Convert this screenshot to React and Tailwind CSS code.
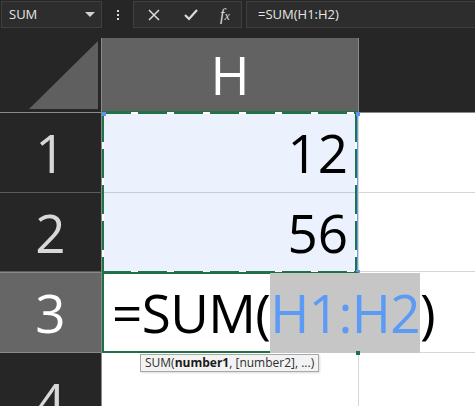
import React from "react";

const sans = { fontFamily: '"Open Sans", "Noto Sans", sans-serif' };

function Ants({ className }) {
  return <div className={`absolute ${className}`} />;
}

export default function App() {
  return (
    <div className="h-[406px] w-[475px] overflow-hidden bg-[#262626]" style={sans}>
      {/* formula bar */}
      <div className="flex h-[38px] items-start pt-[1px]">
        <div className="ml-[1px] flex h-[27px] w-[101px] items-center justify-between border border-[#3f3f3f] bg-[#2d2d2d] pl-[7px] pr-[6px]">
          <span className="text-[13px] text-[#e6e6e6]">SUM</span>
          <svg width="10" height="6" viewBox="0 0 10 6">
            <path d="M0 0h10L5 5z" fill="#d0d0d0" />
          </svg>
        </div>
        <div className="flex h-[27px] w-[31px] flex-col items-center justify-center gap-[2px]">
          <span className="h-[2px] w-[2px] bg-[#d6d6d6]" />
          <span className="h-[2px] w-[2px] bg-[#d6d6d6]" />
          <span className="h-[2px] w-[2px] bg-[#d6d6d6]" />
        </div>
        <div className="flex h-[27px] w-[109px] items-center border border-[#3f3f3f] bg-[#2d2d2d]">
          <div className="flex w-[38px] justify-center pl-[2px]">
            <svg width="12" height="12" viewBox="0 0 12 12">
              <path d="M1 1l10 10M11 1L1 11" stroke="#dcdcdc" strokeWidth="1.5" />
            </svg>
          </div>
          <div className="flex w-[38px] justify-center">
            <svg width="14" height="12" viewBox="0 0 14 12">
              <path d="M1 6l4 4 8-9" stroke="#dcdcdc" strokeWidth="2.2" fill="none" />
            </svg>
          </div>
          <div className="flex w-[30px] justify-center">
            <span className="text-[16px] italic text-[#dcdcdc]" style={{ fontFamily: '"Liberation Serif", serif' }}>
              f<span className="text-[12px]">x</span>
            </span>
          </div>
        </div>
        <div className="ml-[4px] flex h-[27px] flex-1 items-center border border-r-0 border-[#3f3f3f] bg-[#2d2d2d] pl-[11px]">
          <span className="text-[13px] text-[#e6e6e6]">=SUM(H1:H2)</span>
        </div>
      </div>

      {/* sheet */}
      <div className="relative grid grid-cols-[102px_256px_1fr] grid-rows-[75px_80px_79px_81px_60px] text-[53px] leading-none">
        {/* header row */}
        <div className="relative border-b border-r border-[#8a8a8a] bg-[#262626]">
          <svg className="absolute bottom-[3px] right-[3px]" width="69" height="68" viewBox="0 0 69 68">
            <path d="M69 0V68H0z" fill="#5f5f5f" />
          </svg>
        </div>
        <div className="flex items-center justify-center border-b-2 border-[#217346] bg-[#626262] text-white">
          H
        </div>
        <div className="border-b border-l border-[#8a8a8a] bg-[#262626]" />

        {/* row 1 */}
        <div className="flex items-center justify-center border-b border-r border-[#5c5c5c] border-r-[#8a8a8a] text-[#d8d8d8]">
          1
        </div>
        <div className="flex items-center justify-end border-b border-[#c9cbd3] bg-[#ebf2fd] pr-[10px] text-black">
          12
        </div>
        <div className="border-b border-l border-[#d6d6d6] bg-white" />

        {/* row 2 */}
        <div className="flex items-center justify-center border-b border-r border-[#5c5c5c] border-r-[#8a8a8a] text-[#d8d8d8]">
          2
        </div>
        <div className="flex items-center justify-end bg-[#ebf2fd] pr-[10px] text-black">56</div>
        <div className="border-b border-l border-[#d6d6d6] bg-white" />

        {/* row 3 */}
        <div className="flex items-center justify-center border-y border-r border-[#8a8a8a] bg-[#666666] text-white">
          3
        </div>
        <div className="relative z-10 flex items-center whitespace-nowrap border-2 border-[#1e7145] bg-white pl-[8px] tracking-[-0.6px] text-black">
          <span>=SUM(</span>
          <span className="flex h-[80px] items-center bg-[#c6c6c6] text-[#5b9bf5]">H1:H2</span>
          <span>)</span>
        </div>
        <div className="border-b border-[#d6d6d6] bg-white" />

        {/* row 4 */}
        <div className="flex items-start justify-center border-r border-[#8a8a8a] pt-[22px] text-[#d8d8d8]">4</div>
        <div className="bg-white" />
        <div className="border-l border-[#d6d6d6] bg-white" />

        {/* marching ants around H1:H2 */}
        <Ants className="left-[102px] top-[74px] h-[2px] w-[256px] bg-[repeating-linear-gradient(90deg,#217346_0_29px,#ffffff_29px_36px)]" />
        <Ants className="left-[102px] top-[233px] h-[2px] w-[256px] bg-[repeating-linear-gradient(90deg,#217346_0_29px,#ffffff_29px_36px)]" />
        <Ants className="left-[102px] top-[75px] h-[159px] w-[2px] bg-[repeating-linear-gradient(180deg,#217346_0_29px,#ffffff_29px_36px)]" />
        <Ants className="left-[355px] top-[75px] h-[159px] w-[2px] bg-[repeating-linear-gradient(180deg,#217346_0_29px,#ffffff_29px_36px)]" />
        <Ants className="left-[357px] top-[75px] h-[159px] w-[1px] bg-[#6a9ff0]" />
        <Ants className="left-[102px] top-[74px] h-[4px] w-[4px] bg-[#5b93ec]" />
        <Ants className="left-[356px] top-[74px] h-[4px] w-[4px] bg-[#5b93ec]" />
        <Ants className="left-[356px] top-[232px] h-[4px] w-[4px] bg-[#5b93ec]" />
        <Ants className="z-20 left-[356px] top-[313px] h-[4px] w-[4px] bg-[#1e7145]" />

        {/* function tooltip */}
        <div
          className="absolute left-[140px] top-[316px] z-20 flex h-[18px] items-center border border-[#a8a8a8] bg-[#f3f3f3] px-[4px] text-[12px] leading-none text-[#2e2e2e] shadow-[1px_1px_2px_rgba(0,0,0,0.15)]"
          style={sans}
        >
          SUM(<b className="font-bold text-[#1a1a1a]">number1</b>, [number2], ...)
        </div>
      </div>
    </div>
  );
}
